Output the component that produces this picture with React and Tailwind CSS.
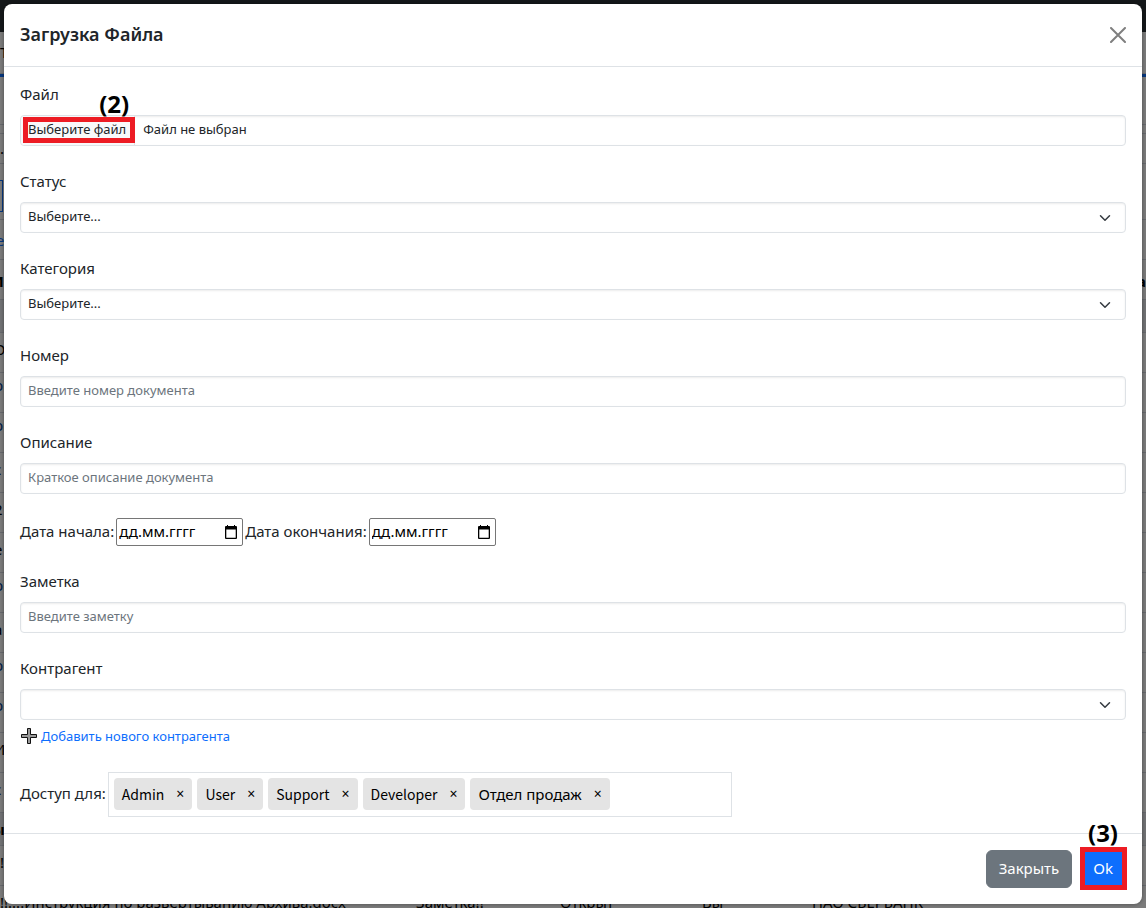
import { useRef, useState } from 'react';

const controlClass =
    'block w-full h-[31px] rounded border border-[#dee2e6] bg-white px-[7px] text-[13px] text-[#212529] placeholder:text-[#6c757d] shadow-[inset_0_1px_2px_rgba(0,0,0,0.075)] outline-none';

// Rows of the documents table that stay visible behind the dialog
const tableRows = [
    { text: 'О' },
    { text: 'р', link: true },
    { text: 'р', link: true },
    { text: 'с' },
    { text: '2' },
    { text: 'е' },
    { text: 'р', link: true },
    { text: 'а' },
    { text: 'р', link: true },
    { text: 'р', link: true },
    { text: 'И' },
    { text: 'с' },
];

const initialRoles = [
    { name: 'Admin' },
    { name: 'User' },
    { name: 'Support' },
    { name: 'Developer' },
    { name: 'Отдел продаж', department: true },
];

function PageBehind() {
    return (
        <div aria-hidden="true" className="absolute inset-0 overflow-hidden bg-[#f8f8f8] text-[15px] text-black">
            <div className="h-8 bg-[#2b3035]" />
            <div className="h-[42px] border-b border-gray-300 pt-2 leading-6">Т</div>
            <div className="h-[3px] bg-[#0d6efd]" />
            <div className="h-12 border-b border-gray-300" />
            <div className="h-[9px] border-b border-gray-300" />
            <div className="h-[30px] border-b border-gray-300 leading-7">.</div>
            <div className="h-4" />
            <div className="h-8 w-[3px] border-y border-r border-[#0d6efd]" />
            <div className="h-2 border-b border-gray-300" />
            <div className="h-10 border-b border-gray-300 leading-10 text-[#0d6efd]">
                <span className="-ml-1">е</span>
            </div>
            <div className="flex h-10 items-center justify-between border-b border-gray-300 pt-1 font-bold">
                <span className="-ml-2">И</span>
                <span>а</span>
            </div>
            <div className="h-[33px] border-b border-gray-300 bg-gray-200" />
            {tableRows.map((row, i) => (
                <div
                    key={i}
                    className={`h-10 border-b border-gray-300 ${row.link ? 'leading-6 text-[#0a3f8f]' : 'leading-8'}`}
                >
                    <span className="-ml-1.5">{row.text}</span>
                </div>
            ))}
            <div className="h-[33px] border-b border-gray-300 bg-gray-200 font-bold leading-8">
                <span className="-ml-2">ы</span>
            </div>
            <div className="h-10 border-b border-gray-300 leading-8">!</div>
            <div className="grid h-10 grid-cols-[416px_144px_142px_110px_1fr] whitespace-nowrap leading-8">
                <span>!!....Инструкция по развертыванию Архива.docx</span>
                <span>Заметка!!</span>
                <span>Открыт</span>
                <span>Вы</span>
                <span>ПАО СБЕРБАНК</span>
            </div>
        </div>
    );
}

function Field({ id, label, children }) {
    return (
        <div className="mb-6">
            <label htmlFor={id} className="mb-2.5 block leading-[22px]">
                {label}
            </label>
            {children}
        </div>
    );
}

function TextField({ id, label, placeholder }) {
    return (
        <Field id={id} label={label}>
            <input id={id} placeholder={placeholder} className={`${controlClass} pb-1`} />
        </Field>
    );
}

function SelectField({ id, label, placeholder, children }) {
    return (
        <Field id={id} label={label}>
            <div className="relative">
                <select id={id} className={`${controlClass} appearance-none pb-0.5`}>
                    <option>{placeholder}</option>
                </select>
                <svg viewBox="0 0 16 16" className="pointer-events-none absolute right-[15px] top-2.5 size-3">
                    <path
                        d="m2 5 6 6 6-6"
                        fill="none"
                        stroke="#343a40"
                        strokeWidth="2"
                        strokeLinecap="round"
                        strokeLinejoin="round"
                    />
                </svg>
            </div>
            {children}
        </Field>
    );
}

function FileField() {
    const inputRef = useRef(null);
    const [fileName, setFileName] = useState('');

    return (
        <Field id="file" label="Файл">
            <div className="flex h-[31px] items-stretch rounded border border-[#dee2e6] text-[13px] shadow-[inset_0_1px_2px_rgba(0,0,0,0.075)]">
                <input
                    ref={inputRef}
                    id="file"
                    type="file"
                    className="sr-only"
                    onChange={(e) => setFileName(e.target.files[0]?.name ?? '')}
                />
                <div className="relative flex">
                    <button
                        type="button"
                        className="rounded-l border-r border-[#dee2e6] bg-[#f8f9fa] pl-[7px] pr-2 pb-0.5"
                        onClick={() => inputRef.current.click()}
                    >
                        Выберите файл
                    </button>
                    <span className="pointer-events-none absolute bottom-0.5 left-0.5 right-0 top-px border-5 border-[#ed1c24]" />
                    <Step className="-top-7 right-1.5">(2)</Step>
                </div>
                <span className="pl-2 pb-0.5 leading-[27px]">{fileName || 'Файл не выбран'}</span>
            </div>
        </Field>
    );
}

function Step({ className, children }) {
    return (
        <span className={`pointer-events-none absolute text-2xl font-bold leading-8 text-black ${className}`}>
            {children}
        </span>
    );
}

function CalendarIcon() {
    return (
        <svg viewBox="0 0 14 15" className="h-[15px] w-[14px]">
            <path
                fill="#000"
                fillRule="evenodd"
                d="M3 0h1v1h6V0h1v1h1q1 0 1 1v11q0 1-1 1H2q-1 0-1-1V2q0-1 1-1h1zM2.300 4.500v8.200h9.400V4.500z"
            />
        </svg>
    );
}

function DateInput({ id, label }) {
    return (
        <>
            <label htmlFor={id} className="pb-0.5">
                {label}
            </label>
            <div className="flex h-7 w-[127px] items-center rounded-xs border border-[#767676] pl-0.5 pr-1 text-black">
                <input
                    id={id}
                    placeholder="дд.мм.гггг"
                    className="min-w-0 flex-1 pb-0.5 outline-none placeholder:text-black"
                />
                <button type="button" aria-label="Календарь">
                    <CalendarIcon />
                </button>
            </div>
        </>
    );
}

function CloseIcon() {
    return (
        <svg viewBox="0 0 16 16" className="size-4">
            <path d="M1 1l14 14M15 1L1 15" stroke="currentColor" strokeWidth="2" strokeLinecap="round" />
        </svg>
    );
}

function PlusIcon() {
    return (
        <svg viewBox="0 0 16 16" className="size-4">
            <path d="M6.500 0.500h3v6h6v3h-6v6h-3v-6h-6v-3h6z" fill="#999" stroke="#111" strokeWidth="1" />
        </svg>
    );
}

export default function App() {
    const [roles, setRoles] = useState(initialRoles);

    return (
        <div className="relative min-h-screen font-['Noto_Sans',sans-serif] text-[15px] text-[#212529]">
            <PageBehind />
            <div className="relative min-h-screen bg-black/50 p-1">
                <div role="dialog" aria-labelledby="title" className="rounded-lg bg-white shadow-[0_0_4px_rgba(0,0,0,0.4)]">
                    {/* Header */}
                    <div className="flex items-center justify-between border-b border-[#dee2e6] px-4 py-4">
                        <h5 id="title" className="pb-0.5 text-lg font-semibold">
                            Загрузка Файла
                        </h5>
                        <button type="button" aria-label="Закрыть окно" className="text-[#7f7f7f]">
                            <CloseIcon />
                        </button>
                    </div>

                    {/* Form */}
                    <form className="p-4">
                        <FileField />
                        <SelectField id="status" label="Статус" placeholder="Выберите..." />
                        <SelectField id="category" label="Категория" placeholder="Выберите..." />
                        <TextField id="number" label="Номер" placeholder="Введите номер документа" />
                        <TextField id="description" label="Описание" placeholder="Краткое описание документа" />
                        <div className="mb-6 flex flex-wrap items-center gap-x-0.5">
                            <DateInput id="date-start" label="Дата начала:" />
                            <DateInput id="date-end" label="Дата окончания:" />
                        </div>
                        <TextField id="note" label="Заметка" placeholder="Введите заметку" />
                        <SelectField id="contractor" label="Контрагент" placeholder="">
                            <a href="#new" className="mt-1 flex items-center gap-1 pl-px text-[13px] leading-6 text-[#0d6efd]">
                                <PlusIcon />
                                Добавить нового контрагента
                            </a>
                        </SelectField>
                        <div className="flex items-center gap-0.5">
                            <span className="shrink-0 pb-0.5">Доступ для:</span>
                            <div className="flex min-h-[45px] w-full max-w-[624px] flex-wrap gap-[5px] border border-[#dee2e6] p-[5px] text-black">
                                {roles.map((role) => (
                                    <span
                                        key={role.name}
                                        className={`flex h-8 items-center gap-3 rounded-sm bg-[#e4e4e4] px-2 ${role.department
                                                ? 'text-[15px]'
                                                : "font-['Noto_Sans_CJK_JP',sans-serif] text-sm"
                                            }`}
                                    >
                                        {role.name}
                                        <button
                                            type="button"
                                            aria-label={`Удалить ${role.name}`}
                                            className="font-['Noto_Sans',sans-serif] text-sm"
                                            onClick={() => setRoles(roles.filter((r) => r !== role))}
                                        >
                                            ×
                                        </button>
                                    </span>
                                ))}
                            </div>
                        </div>
                    </form>

                    {/* Footer */}
                    <div className="flex justify-end gap-2 border-t border-[#dee2e6] p-4">
                        <button type="button" className="h-[38px] rounded-md border border-[#6c757d] bg-[#6c757d] px-3 pb-0.5 text-white">
                            Закрыть
                        </button>
                        <div className="relative">
                            <button type="button" className="h-[38px] rounded-md border border-[#0d6efd] bg-[#0d6efd] px-3 pb-0.5 text-white">
                                Ok
                            </button>
                            <span className="pointer-events-none absolute -bottom-0.5 -right-px -top-[3px] left-0 border-5 border-[#ed1c24]" />
                            <Step className="-top-[33px] right-2">(3)</Step>
                        </div>
                    </div>
                </div>
            </div>
        </div>
    );
}
